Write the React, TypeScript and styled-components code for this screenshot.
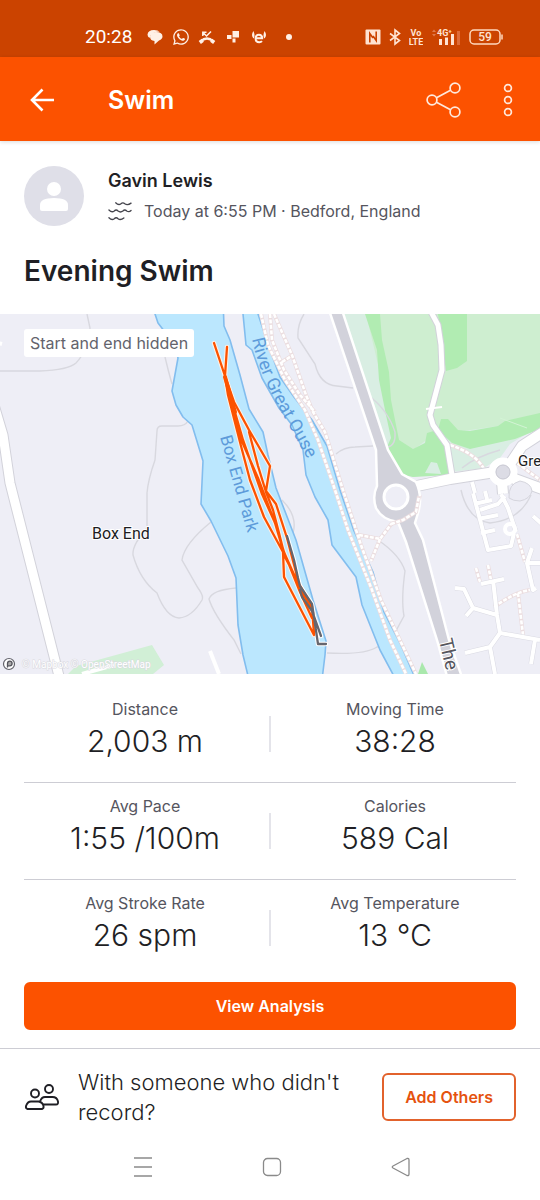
import React from "react";
import styled, { createGlobalStyle } from "styled-components";
import { FaWhatsapp } from "react-icons/fa";

const ORANGE = "#fc5200";
const INK = "#1f1f25";
const MUTED = "#55555e";

const GlobalStyle = createGlobalStyle`
  *, *::before, *::after { box-sizing: border-box; }
  body {
    margin: 0;
    background: #fff;
    color: ${INK};
    font-family: Inter, "Liberation Sans", sans-serif;
  }
  h1, h2, p, dl, dt, dd { margin: 0; font-weight: 400; }
  button { font-family: inherit; cursor: pointer; }
  svg { display: block; flex: none; }
`;

const Screen = styled.div`
  display: flex;
  flex-direction: column;
  min-height: 100vh;
`;

const StatusBar = styled.div`
  display: flex;
  justify-content: space-between;
  align-items: center;
  height: 57px;
  padding: 16px 37px 0 85px;
  background: #cb4300;
  color: #fff;
`;

const StatusGroup = styled.div`
  display: flex;
  align-items: center;
  gap: 8px;
  color: #fff0e6;
`;

const Clock = styled.span`
  margin-right: 6px;
  font-family: Roboto, sans-serif;
  font-size: 19px;
  line-height: 24px;
  color: #fff;
`;

const AppBar = styled.header`
  display: flex;
  align-items: center;
  height: 84px;
  padding: 2px 24px 0;
  background: ${ORANGE};
  color: #fff;
  box-shadow: 0 1px 4px rgba(0, 0, 0, 0.15);
`;

const IconButton = styled.button`
  display: flex;
  justify-content: center;
  align-items: center;
  width: 36px;
  height: 48px;
  padding: 0;
  border: 0;
  background: none;
  color: inherit;
`;

const BarTitle = styled.h1`
  flex: 1;
  margin-left: 48px;
  font-size: 25px;
  line-height: 32px;
  font-weight: 600;
`;

const BarActions = styled.div`
  display: flex;
  gap: 28px;
  margin-right: -10px;
`;

const Author = styled.section`
  display: flex;
  align-items: center;
  gap: 24px;
  padding: 25px 24px 0;
`;

const AuthorText = styled.div`
  display: flex;
  flex-direction: column;
  gap: 2px;
`;

const Name = styled.h2`
  font-size: 18px;
  line-height: 28px;
  font-weight: 600;
`;

const Meta = styled.p`
  display: flex;
  align-items: center;
  gap: 12px;
  font-size: 16px;
  line-height: 28px;
  color: ${MUTED};
`;

const ActivityTitle = styled.h2`
  padding: 27px 24px 25px;
  font-size: 28px;
  line-height: 36px;
  font-weight: 600;
`;

const MapFrame = styled.section`
  position: relative;
  height: 360px;
  overflow: hidden;
  background: #eeeef6;
`;

const MapSvg = styled.svg`
  width: 100%;
  height: 100%;
`;

const MapBadge = styled.span`
  position: absolute;
  top: 15px;
  left: 24px;
  padding: 0 6px;
  border-radius: 3px;
  background: #fff;
  font-size: 16px;
  line-height: 28px;
  color: #63636c;
`;

const Stats = styled.dl`
  padding: 12px 24px 0;
`;

const StatRow = styled.div`
  display: grid;
  grid-template-columns: 1fr 2px 1fr;
  gap: 3px;
  padding: 13px 0 23px;

  & + & { border-top: 1px solid #cdcdd4; }
`;

const Stat = styled.div`
  display: flex;
  flex-direction: column;
  gap: 4px;
  text-align: center;
`;

const StatLabel = styled.dt`
  font-size: 16px;
  line-height: 20px;
  color: ${MUTED};
`;

const StatValue = styled.dd`
  font-size: 30px;
  line-height: 36px;
  font-weight: 300;
`;

const StatDivider = styled.div`
  height: 36px;
  margin-top: 17px;
  background: #e4e4ea;
`;

const Button = styled.button<{ $filled?: boolean }>`
  height: 48px;
  padding: 0 21px;
  border: 2px solid ${(p) => (p.$filled ? ORANGE : "#e2622c")};
  border-radius: 6px;
  background: ${(p) => (p.$filled ? ORANGE : "#fff")};
  color: ${(p) => (p.$filled ? "#fff" : "#e5520f")};
  font-size: 16px;
  font-weight: 600;
  white-space: nowrap;
`;

const Analysis = styled.div`
  display: grid;
  padding: 6px 24px 18px;
`;

const Others = styled.section`
  display: flex;
  align-items: center;
  gap: 18px;
  padding: 18px 24px 7px;
  border-top: 1px solid #cdcdd4;
`;

const OthersText = styled.p`
  flex: 1;
  font-size: 22px;
  line-height: 30px;
  font-weight: 300;
`;

const NavBar = styled.nav`
  display: flex;
  justify-content: center;
  gap: 93px;
  padding: 9px 0 0 4px;
  color: #8a8a8a;
`;

const footpaths = [
  "M270 314L272 340L284 370L300 395L315 412",
  "M274 314L292 355L306 395L313 412L325 432L343 490L361 545L381 600L416 674",
  "M261 314L268 345L285 380L305 410L318 440L335 490L348 530L372 590L390 640L406 674",
  "M359 535L380 539L392 523L416 512L420 495",
  "M380 539L371 561",
  "M282 362L293 355",
  "M450 445Q475 453 484 469M514 456Q525 440 540 432M513 460L540 480",
  "M494 607Q515 592 530 590M518 593L523 635M517 534L525 562M476 568L480 582M488 565L491 580",
].join("");

const islandPath = "M391 524L403 520L416 512L419 496";

const localRoads = {
  lane: "M-6 405L3 435L10 483L27 550L60 680",
  parkRoad: "M430 310L438 325L441 345L442 370L430 415L433 425L447 445L452 475",
  avenue: "M412 487L450 479L495 472M510 464L522 446L545 431M512 478L545 490M502 481L503 494",
};

const streets =
  "M473 493L488 550L511 546L514 533M474 504L492 500M478 519L498 515M481 533L495 530M501 494L508 508L516 532" +
  "M480 510L498 504L505 496M455 588L464 589L473 608L497 615M473 608L466 616M493 580L497 615L500 633L540 640" +
  "M500 633L490 647L465 653M490 647L495 674M481 584L504 579M535 640L531 664M540 563L527 563L533 590L536 588" +
  "M527 563L532 548M475 493L472 482M485 491L487 499M533 516L542 524";

const laps =
  "M214 343L225 376L234 402L249 430L270 466L266 491L276 504L287 538L298 580" +
  "M227 347L225 376L228 395L241 446L250 480L264 517L283 552L284 577L314 635" +
  "M226 382L240 437L258 478L275 523L283 550L300 588L313 612L314 635" +
  "M249 432L258 466L266 492L273 510L279 533L285 557L299 584L312 606L314 635" +
  "M228 388L243 440L262 494L276 525L284 552L300 592L312 618";

const hiddenLaps = "M287 536L294 560L298 578L300 586L312 604L318 644H326M300 590L302 597L312 611L321 636";

function MapDrawing() {
  return (
    <MapSvg viewBox="0 314 540 360" preserveAspectRatio="xMidYMid slice" role="img" aria-label="Route map">
      <defs>
        <path id="river-name" d="M252 339C256 358 262 374 270 391S292 430 318 478" />
      </defs>
      <rect x="-600" y="0" width="1800" height="1200" fill="#eeeef6" />

      {/* parkland */}
      <path d="M343 314H540V426L510 444L500 458L484 468L452 472L413 477L400 474L387 447Z" fill="#d9eee3" />
      <path d="M366 314H540V420L470 430L437 432L413 450L396 440Z" fill="#ceeed0" />
      <path d="M365 314H380L382 340L389 372L391 400L399 440L413 449L425 443L427 433L437 430L447 445L449 475L413 477L400 474L387 447L391 438L386 415L379 380L377 350Z" fill="#b1ecb2" />
      <path d="M438 314H467V361L457 368L446 371L442 345Z" fill="#b1ecb2" />
      <path d="M441 419L448 419L458 430L470 431L498 426L505 421L540 413V429L515 439L470 449L452 443L438 430Z" fill="#b1ecb2" />
      <path d="M425 473L431 462L437 463L441 474Z" fill="#d9eee3" />
      <path d="M68 674L76 666L152 645L164 665L153 674Z" fill="#d1efd6" />
      <path d="M418 674L422 662L428 674Z" fill="#a9e8ac" />
      <path d="M500 418L527 428" stroke="#d3f3d5" fill="none" />

      {/* field outlines */}
      <g fill="none" stroke="#d8d8df" strokeWidth="1.4">
        <path d="M87 314L90 328Q87 352 76 363Q68 370 40 371H0" />
        <path d="M165 357Q168 370 172 384" />
        <path d="M188 421Q185 426 178 426H162Q157 426 157 431L155 460Q148 480 147 493V528Q132 545 133 555Q140 580 157 593Q166 617 179 618Q192 617 202 600Q204 596 198 588L182 560Q184 544 211 522" />
        <path d="M236 588Q212 590 209 599Q213 613 234 640L241 654" />
        <path d="M304 314Q297 325 298 338L315 364Q320 385 337 386L353 388" />
        <path d="M336 454Q344 447 355 447L373 446" />
        <path d="M368 395Q388 410 395 432Q396 445 388 447" />
        <path d="M282 500Q298 516 293 533" />
        <path d="M378 540Q400 555 405 571Q401 600 404 616L397 629Q392 646 377 647Q365 655 327 653" />
        <path d="M461 490Q468 520 490 523Q520 520 531 495" />
        <path d="M462 468Q475 457 500 450" />
      </g>

      {/* water */}
      <g fill="#bbe7fe" stroke="#82bdee" strokeWidth="1.6" strokeLinejoin="round">
        <path d="M155 300L155 314L158 323L175 345L178 358L172 391L176 405L183 417L192 425L203 461L201 504L211 521L228 556L236 578L238 625L243 655L249 680H322L325 655L326 641L313 600L296 540L276 488L268 455L263 432L249 409L240 375L230 340L224 326L223 300Z" />
        <path d="M243 300L243 314L246 345L252 350L262 378L279 408L292 425L303 450L306 475L315 497L328 520L332 545L356 577L362 605L380 650L396 680H416L401 645L384 612L373 572L354 531L340 490L327 446L312 420L294 397L280 377L270 350L258 314V300Z" />
      </g>

      <g fill="none">
        <path d={footpaths} stroke="#ebdddf" strokeWidth="4" />
        <path d={footpaths} stroke="#fff" strokeWidth="2.6" strokeDasharray="4 1.5" />
      </g>

      {/* local roads: casing, then surface */}
      <g fill="none" stroke="#d2d2da" strokeLinejoin="round">
        <path d={localRoads.lane} strokeWidth="11" />
        <path d={localRoads.parkRoad} strokeWidth="7" />
        <path d={localRoads.avenue} strokeWidth="12" />
      </g>
      <g fill="none" stroke="#fff" strokeLinejoin="round">
        <path d={localRoads.lane} strokeWidth="9" />
        <path d={localRoads.parkRoad} strokeWidth="5" />
        <path d={localRoads.avenue} strokeWidth="10" />
        <path d="M-2 343L2 344" strokeWidth="4" />
        <path d="M82 674L114 665M210 651L219 674" strokeWidth="4" />
        <path d="M426 409L442 407" strokeWidth="2" />
        <circle cx="503" cy="472" r="11" strokeWidth="7" />
      </g>
      <circle cx="503" cy="472" r="7" fill="#dcdce5" stroke="#c9c9d2" />
      <path d="M509 498Q508 484 520 481Q531 483 532 491Q530 499 520 501Q513 501 509 498Z" fill="#ececf4" stroke="#d5d5dd" />

      {/* residential streets */}
      <g fill="none" strokeLinejoin="round">
        <path d={streets} stroke="#dadae3" strokeWidth="5" />
        <path d={streets} stroke="#fff" strokeWidth="4" />
        <circle cx="510" cy="529" r="5" stroke="#fff" strokeWidth="4" />
      </g>

      {/* trunk road and roundabout */}
      <path d="M329 310L376 450L377 486Q372 496 376 508Q382 520 398 522L406 542L437 640L448 680H463L449 640L423 540L415 523L418 513Q423 497 416 482L402 474L388 450L342 310Z" fill="#d2d2db" stroke="#fff" strokeWidth="2.5" />
      <circle cx="396" cy="497" r="12" fill="#eeeef6" stroke="#fff" strokeWidth="3" />
      <path d={islandPath} fill="none" stroke="#ebdddf" strokeWidth="4" />
      <path d={islandPath} fill="none" stroke="#fff" strokeWidth="2.6" strokeDasharray="4 1.5" />

      {/* recorded route, with its hidden stretch in grey */}
      <g fill="none" strokeLinejoin="round" strokeLinecap="round">
        <path d={laps} stroke="#fff1e6" strokeWidth="4.4" />
        <path d={hiddenLaps} stroke="#fff" strokeWidth="4.4" />
        <path d={laps} stroke={ORANGE} strokeWidth="2.3" />
        <path d="M225 377L229 391L235 412" stroke={ORANGE} strokeWidth="4" />
        <path d={hiddenLaps} stroke="#66666e" strokeWidth="2.3" />
      </g>

      {/* labels */}
      <g fontFamily="Roboto, sans-serif">
        <g fill="#5d9bda">
          <text fontSize="18"><textPath href="#river-name">River Great Ouse</textPath></text>
          <text fontSize="17" transform="translate(220 437) rotate(74)">Box End Park</text>
        </g>
        <g fill="#1c1c22" stroke="#fff" strokeWidth="2" paintOrder="stroke" fontSize="16">
          <text x="92" y="539">Box End</text>
          <text x="518" y="466" fontSize="15">Gre</text>
        </g>
        <text transform="translate(439 640) rotate(77)" fill="#55555d" stroke="#fff" strokeWidth="2" paintOrder="stroke" fontSize="19">The</text>
        <text x="22" y="668" fill="#fff" stroke="#d9d9e0" strokeWidth="1" paintOrder="stroke" fontSize="10">© Mapbox © OpenStreetMap</text>
      </g>
      <circle cx="9" cy="664" r="5.5" fill="#fff" stroke="#63636b" strokeWidth="1.2" />
      <path d="M7.5 667.5V663.5A2.3 2.3 0 1 1 9.8 665.8H7.5" fill="#aaa" stroke="#55555d" strokeWidth="1.3" />
    </MapSvg>
  );
}

function StatusIcons() {
  return (
    <>
      <svg width="18" height="18" viewBox="0 0 18 18" fill="currentColor">
        <path d="M1.500 6.500Q2 2 8 2Q12 2 13.500 3.500Q5 3.500 3.500 10Q1.500 8.500 1.500 6.500Z" />
        <path d="M4 8.500Q4.500 4 10 4Q16.500 4 16.500 8.500Q16.500 11 13 12.500L8.500 16.500V13Q4 12.500 4 8.500Z" />
      </svg>
      <FaWhatsapp size={18} />
      <svg width="18" height="18" viewBox="0 0 18 18" fill="none" stroke="currentColor">
        <path d="M2.500 13.500Q9 7.500 15.500 13.500" strokeWidth="2.2" />
        <path d="M1.800 14.500L4.800 12.200M16.200 14.500L13.200 12.200" strokeWidth="3.6" />
        <path d="M13 3.500L8.500 8L5 4.500M4.800 8V4.200H8.500" strokeWidth="1.5" />
      </svg>
      <svg width="18" height="18" viewBox="0 0 18 18" fill="currentColor">
        <path d="M8.500 3H15V9.500H8.500ZM3 7H7.500V11H3ZM8.500 10.500H11.500V14.500H8.500Z" />
      </svg>
      <svg width="18" height="18" viewBox="0 0 18 18" fill="none" stroke="currentColor">
        <path d="M5.800 10.300H12.200Q12.200 6.800 9 6.800Q5.600 6.800 5.600 10.500Q5.600 14.300 9.300 14.300Q11 14.300 12 13.200" strokeWidth="2" />
        <path d="M3.500 3Q.5 7 3.500 10.500Q5.500 8.500 3.500 3ZM14.500 3Q17.500 7 14.500 10.500Q12.500 8.500 14.500 3Z" fill="currentColor" stroke="none" />
      </svg>
      <svg width="26" height="18" viewBox="0 0 26 18" fill="currentColor"><circle cx="13" cy="9" r="3" /></svg>
    </>
  );
}

function SystemIcons() {
  return (
    <>
      <svg width="16" height="16" viewBox="0 0 16 16">
        <rect x=".5" y=".5" width="15" height="15" rx="1" fill="#ffe3d2" />
        <path d="M4.800 13.500V4.500L8 9M11.200 2.500V11.500L8 7" stroke="#cb4300" strokeWidth="1.6" fill="none" />
      </svg>
      <svg width="12" height="18" viewBox="0 0 12 18" fill="none" stroke="#ffe3d2" strokeWidth="1.6">
        <path d="M1 5.500L10.500 12.500L6 16V2L10.500 5.500L1 12.500" />
      </svg>
      <svg width="14" height="18" viewBox="0 0 14 18" fill="#ffe3d2" fontFamily="Roboto, sans-serif" fontWeight="700" fontSize="9" textAnchor="middle">
        <text x="7" y="8">Vo</text>
        <text x="7" y="17">LTE</text>
      </svg>
      <svg width="30" height="18" viewBox="0 0 30 18" fill="#ffe3d2">
        <path d="M1 4L3 1.500L5 4ZM1 6L3 8.500L5 6Z" fill="#e07b4d" />
        <path d="M8 11H11V17H8ZM14 9.500H17V17H14ZM20 6H23V17H20Z" />
        <path d="M26 3H29V17H26Z" fill="#dd6b38" />
        <text x="6" y="8" fontFamily="Roboto, sans-serif" fontWeight="700" fontSize="9">4G⁺</text>
      </svg>
      <svg width="34" height="18" viewBox="0 0 34 18" fill="none" stroke="#ffd9bf" strokeWidth="1.5">
        <rect x="1" y="2" width="30" height="14" rx="4" />
        <path d="M33 6.500V11.500" />
        <text x="16" y="13" textAnchor="middle" fill="#ffe3d2" stroke="none" fontFamily="Roboto, sans-serif" fontWeight="500" fontSize="12">59</text>
      </svg>
    </>
  );
}

const rows = [
  [{ label: "Distance", value: "2,003 m" }, { label: "Moving Time", value: "38:28" }],
  [{ label: "Avg Pace", value: "1:55 /100m" }, { label: "Calories", value: "589 Cal" }],
  [{ label: "Avg Stroke Rate", value: "26 spm" }, { label: "Avg Temperature", value: "13 ℃" }],
];

export default function App() {
  return (
    <Screen>
      <GlobalStyle />
      <StatusBar>
        <StatusGroup>
          <Clock>20:28</Clock>
          <StatusIcons />
        </StatusGroup>
        <StatusGroup>
          <SystemIcons />
        </StatusGroup>
      </StatusBar>

      <AppBar>
        <IconButton aria-label="Back">
          <svg width="24" height="24" viewBox="0 0 24 24" fill="none" stroke="currentColor" strokeWidth="2.6">
            <path d="M24 12H2M12.500 1.500L2 12L12.500 22.500" />
          </svg>
        </IconButton>
        <BarTitle>Swim</BarTitle>
        <BarActions>
          <IconButton aria-label="Share">
            <svg width="36" height="36" viewBox="0 0 36 36" fill="none" stroke="#ffe9dc" strokeWidth="1.7">
              <circle cx="6" cy="18" r="4.9" />
              <circle cx="29" cy="6" r="4.9" />
              <circle cx="29" cy="30" r="4.9" />
              <path d="M10.500 15.700L24.500 8.300M10.500 20.300L24.500 27.700" />
            </svg>
          </IconButton>
          <IconButton aria-label="More options">
            <svg width="10" height="34" viewBox="0 0 10 34" fill="none" stroke="#ffe9dc" strokeWidth="1.7">
              <circle cx="5" cy="5" r="3.4" />
              <circle cx="5" cy="17" r="3.4" />
              <circle cx="5" cy="29" r="3.4" />
            </svg>
          </IconButton>
        </BarActions>
      </AppBar>

      <main>
        <Author>
          <svg width="60" height="60" viewBox="0 0 60 60">
            <circle cx="30" cy="30" r="30" fill="#dfdfe8" />
            <circle cx="30" cy="23" r="7" fill="#fff" />
            <path d="M16 39Q16 32 30 32Q44 32 44 39V43Q44 45 42 45H18Q16 45 16 43Z" fill="#fff" />
          </svg>
          <AuthorText>
            <Name>Gavin Lewis</Name>
            <Meta>
              <svg width="24" height="20" viewBox="0 0 25 20" fill="none" stroke="#44444c" strokeWidth="1.4" strokeLinecap="round">
                <path d="M8 1.500Q11 4.500 13.500 2.500Q15.500 .5 17.500 2.500Q20.500 4.500 24 1.800" />
                <path d="M1 9Q4 12 6.500 10Q8.500 8 10.500 10Q13 12 15.500 10Q17.500 8 19.500 10Q22 11.500 24 9.500" />
                <path d="M1 17Q4 20 6.500 18Q8.500 16 10.500 18Q13 20 16.500 17.200" />
              </svg>
              Today at 6:55 PM · Bedford, England
            </Meta>
          </AuthorText>
        </Author>
        <ActivityTitle>Evening Swim</ActivityTitle>

        <MapFrame>
          <MapDrawing />
          <MapBadge>Start and end hidden</MapBadge>
        </MapFrame>

        <Stats>
          {rows.map(([left, right]) => (
            <StatRow key={left.label}>
              <Stat>
                <StatLabel>{left.label}</StatLabel>
                <StatValue>{left.value}</StatValue>
              </Stat>
              <StatDivider />
              <Stat>
                <StatLabel>{right.label}</StatLabel>
                <StatValue>{right.value}</StatValue>
              </Stat>
            </StatRow>
          ))}
        </Stats>

        <Analysis>
          <Button $filled>View Analysis</Button>
        </Analysis>

        <Others>
          <svg width="36" height="28" viewBox="0 0 36 28" fill="none" stroke={INK} strokeWidth="1.9" strokeLinejoin="round">
            <circle cx="11" cy="10.5" r="4" />
            <circle cx="25" cy="6" r="4" />
            <path d="M3.500 26Q1.500 25.500 2 23Q3.500 18.500 7 18.500H14.500Q18.500 19 19.500 23Q20 25.500 18 26Z" />
            <path d="M16 18.500Q17.500 14 21 14H28.500Q33 14 34 18.500Q34.500 21.500 32 21.500H19" />
          </svg>
          <OthersText>With someone who didn't record?</OthersText>
          <Button>Add Others</Button>
        </Others>
      </main>

      <NavBar aria-label="System navigation">
        <IconButton aria-label="Recent apps">
          <svg width="18" height="20" viewBox="0 0 18 20" stroke="currentColor" strokeWidth="1.5">
            <path d="M0 1H18M0 10H18M0 19H18" />
          </svg>
        </IconButton>
        <IconButton aria-label="Home">
          <svg width="20" height="20" viewBox="0 0 20 20" fill="none" stroke="currentColor" strokeWidth="1.3">
            <rect x="1.500" y="1.500" width="17" height="17" rx="4" />
          </svg>
        </IconButton>
        <IconButton aria-label="Back">
          <svg width="20" height="20" viewBox="0 0 20 20" fill="none" stroke="currentColor" strokeWidth="1.3" strokeLinejoin="round">
            <path d="M2 9Q.5 10 2 11L16 18.500Q18 19 18 17V3Q18 1 16 1.500Z" />
          </svg>
        </IconButton>
      </NavBar>
    </Screen>
  );
}
